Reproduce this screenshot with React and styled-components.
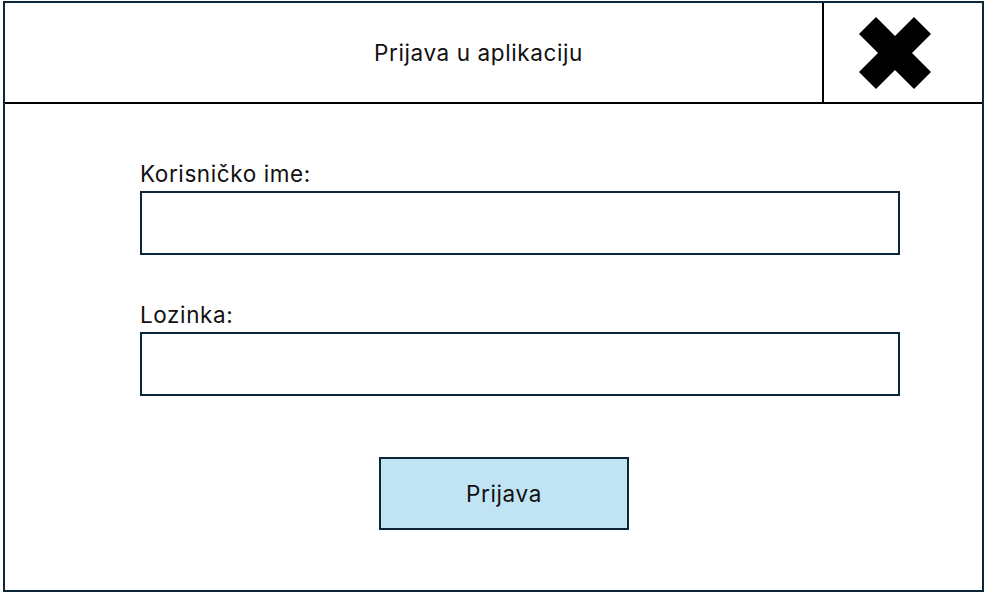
import styled, { createGlobalStyle } from 'styled-components';

const GlobalStyle = createGlobalStyle`
  html, body {
    margin: 0;
    padding: 0;
    background: #fff;
  }
  body {
    font-family: Inter, "Open Sans", sans-serif;
    color: #111;
  }
`

const Frame = styled.div`
  box-sizing: border-box;
  margin: 1px 0 0 3px;
  width: 981px;
  height: 591px;
  border: 2px solid #0c2838;
  display: flex;
  flex-direction: column;
`

const Header = styled.div`
  display: flex;
  height: 101px;
  border-bottom: 2px solid #000;
  box-sizing: border-box;
`

const Title = styled.div`
  flex: 1;
  display: flex;
  align-items: center;
  justify-content: center;
  padding-left: 130px;
  font-size: 22.5px;
  letter-spacing: 0.6px;
`

const CloseCell = styled.div`
  width: 160px;
  box-sizing: border-box;
  border-left: 2px solid #000;
  display: flex;
  align-items: flex-start;
  padding: 14px 0 0 35px;
`

const Body = styled.div`
  padding: 56px 0 0 135px;
  display: flex;
  flex-direction: column;
`

const Label = styled.label`
  display: block;
  font-size: 22.5px;
  line-height: 27px;
  letter-spacing: 0.6px;
  margin-bottom: 4px;
`

const Input = styled.input`
  box-sizing: border-box;
  width: 760px;
  height: 64px;
  border: 2px solid #0c2838;
  background: #fff;
  margin: 0 0 ${p => p.$gap}px;
  outline: none;
`

const Button = styled.button`
  box-sizing: border-box;
  width: 250px;
  height: 73px;
  margin-left: 239px;
  background: #c1e4f5;
  border: 2px solid #0c2838;
  font-family: inherit;
  font-size: 22.5px;
  letter-spacing: 0.6px;
  color: #111;
  padding: 0;
`

function CloseIcon() {
  return (
    <svg width="72" height="72" viewBox="0 0 72 72">
      <polygon
        fill="#000"
        points="17,0 36,19 55,0 72,17 53,36 72,55 55,72 36,53 17,72 0,55 19,36 0,17"
      />
    </svg>
  );
}

export default function App() {
  return (
    <>
      <GlobalStyle />
      <Frame>
        <Header>
          <Title>Prijava u aplikaciju</Title>
          <CloseCell>
            <CloseIcon />
          </CloseCell>
        </Header>
        <Body>
          <Label>Korisničko ime:</Label>
          <Input type="text" $gap={46} />
          <Label>Lozinka:</Label>
          <Input type="password" $gap={61} />
          <Button>Prijava</Button>
        </Body>
      </Frame>
    </>
  );
}
